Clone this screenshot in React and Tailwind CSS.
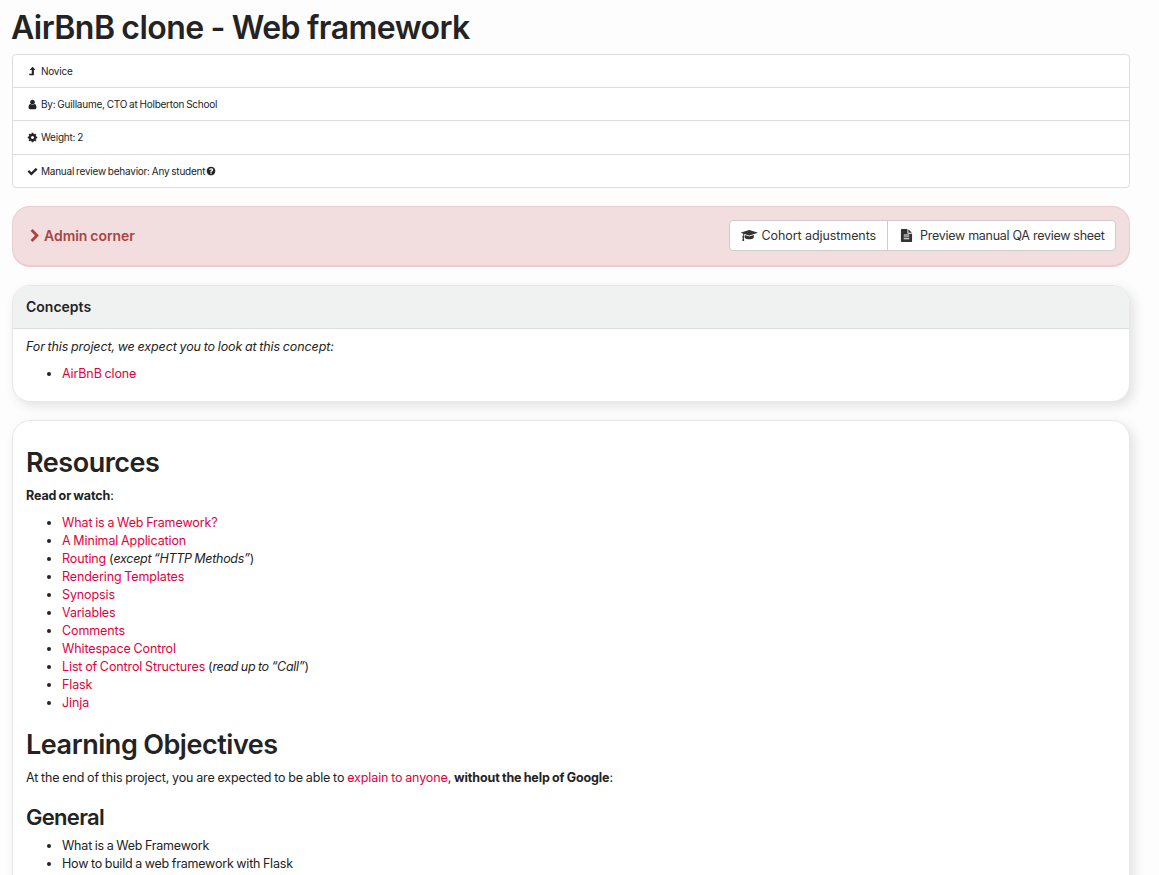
const ICONS = {
  user: "M1536 1399q0 109-62.5 187t-150.5 78h-854q-88 0-150.5-78t-62.5-187q0-85 8.5-160.5t31.5-152 58.5-131 94-89 134.5-34.5q131 128 313 128t313-128q76 0 134.5 34.5t94 89 58.5 131 31.5 152 8.5 160.5zm-256-887q0 159-112.5 271.5t-271.5 112.5-271.5-112.5-112.5-271.5 112.5-271.5 271.5-112.5 271.5 112.5 112.5 271.5z",
  levelUp: "M1400 620q-18 36-58 36h-222v816q0 28-20 28h-620q-14 0-22-12l-150-190q-10-14-6-28 6-14 24-14h450v-600h-222q-40 0-58-36-16-36 10-68l350-384q18-22 48-22t48 22l350 384q26 32 8 68z",
  cog: "M1152 896q0-106-75-181t-181-75-181 75-75 181 75 181 181 75 181-75 75-181zm512-109v222q0 12-8 23t-20 13l-185 28q-19 54-39 91 35 50 107 138 10 12 10 25t-9 23q-27 37-99 108t-94 71q-12 0-26-9l-138-108q-44 23-91 38-16 136-29 186-7 28-36 28h-222q-14 0-24.5-8.5t-11.5-21.5l-28-184q-49-16-90-37l-141 107q-10 9-25 9-14 0-25-11-126-114-165-168-7-10-7-23 0-12 8-23 15-21 51-66.5t54-70.5q-27-50-41-99l-183-27q-13-2-21-12.5t-8-23.5v-222q0-12 8-23t19-13l186-28q14-46 39-92-40-57-107-138-10-12-10-24 0-10 9-23 26-36 98.5-107.5t94.5-71.5q13 0 26 10l138 107q44-23 91-38 16-136 29-186 7-28 36-28h222q14 0 24.5 8.5t11.5 21.5l28 184q49 16 90 37l142-107q9-9 24-9 13 0 25 10 129 119 165 170 7 8 7 22 0 12-8 23-15 21-51 66.5t-54 70.5q26 50 41 98l183 28q13 2 21 12.5t8 23.5z",
  check: "M1671 566q0 40-28 68l-724 724-136 136q-28 28-68 28t-68-28l-136-136-362-362q-28-28-28-68t28-68l136-136q28-28 68-28t68 28l294 295 656-657q28-28 68-28t68 28l136 136q28 28 28 68z",
  question: "M1024 1376v-192q0-14-9-23t-23-9h-192q-14 0-23 9t-9 23v192q0 14 9 23t23 9h192q14 0 23-9t9-23zm256-672q0-88-55.5-163t-138.5-116-170-41q-243 0-371 213-15 24 8 42l132 100q7 6 19 6 16 0 25-12 53-68 86-92 34-24 86-24 48 0 85.5 26t37.5 59q0 38-20 61t-68 45q-63 28-115.5 86.5t-52.5 125.5v36q0 14 9 23t23 9h192q14 0 23-9t9-23q0-19 21.5-49.5t54.5-49.5q32-18 49-28.5t46-35 44.5-48 28-60.5 12.5-81zm384 192q0 209-103 385.5t-279.5 279.5-385.5 103-385.5-103-279.5-279.5-103-385.5 103-385.5 279.5-279.5 385.5-103 385.5 103 279.5 279.5 103 385.5z",
  chevron: "M1363 877l-742 742q-19 19-45 19t-45-19l-166-166q-19-19-19-45t19-45l531-531-531-531q-19-19-19-45t19-45l166-166q19-19 45-19t45 19l742 742q19 19 19 45t-19 45z",
  cap: "M1774 836l18 316q4 69-82 128t-235 93.5-323 34.5-323-34.5-235-93.5-82-128l18-316 574 181q22 7 48 7t48-7zm530-324q0 23-22 31l-1120 352q-4 1-10 1t-10-1l-652-206q-43 34-71 111.5t-34 178.5q63 36 63 109 0 69-58 107l58 433q2 14-8 25-9 11-24 11h-192q-15 0-24-11-10-11-8-25l58-433q-58-38-58-107 0-73 65-111 11-207 98-330l-333-104q-22-8-22-31t22-31l1120-352q4-1 10-1t10 1l1120 352q22 8 22 31z",
  file: "M1596 476q14 14 28 36h-472v-472q22 14 36 28zm-476 164h544v1056q0 40-28 68t-68 28h-1344q-40 0-68-28t-28-68v-1600q0-40 28-68t68-28h800v544q0 40 28 68t68 28zm160 736v-64q0-14-9-23t-23-9h-704q-14 0-23 9t-9 23v64q0 14 9 23t23 9h704q14 0 23-9t9-23zm0-256v-64q0-14-9-23t-23-9h-704q-14 0-23 9t-9 23v64q0 14 9 23t23 9h704q14 0 23-9t9-23zm0-256v-64q0-14-9-23t-23-9h-704q-14 0-23 9t-9 23v64q0 14 9 23t23 9h704q14 0 23-9t9-23z",
};

function Icon({ name, className, width = 1792 }) {
  return (
    <svg viewBox={`0 0 ${width} 1792`} fill="currentColor" className={`block shrink-0 ${className}`}>
      <path d={ICONS[name]} />
    </svg>
  );
}

function MetaRow({ icon, children, className }) {
  return (
    <li className={`flex items-center border-[#ddd] pl-[14px] text-[10px] tracking-[-0.23px] [word-spacing:-0.6px] ${className}`}>
      <Icon name={icon} className="mr-[3px] size-[11px]" />
      {children}
    </li>
  );
}

function Link({ children }) {
  return <a href="#" className="text-[#e0003f]">{children}</a>;
}

function Note({ children }) {
  return <em className="tracking-[-0.3px]">{children}</em>;
}

function Bullets({ items, className = "" }) {
  return (
    <ul className={`list-disc pl-9 ${className}`}>
      {items.map((item, i) => (
        <li key={i} className="h-[18px] whitespace-nowrap">{item}</li>
      ))}
    </ul>
  );
}

const resources = [
  <Link>What is a Web Framework?</Link>,
  <Link>A Minimal Application</Link>,
  <><Link>Routing</Link> (<Note>except “HTTP Methods”</Note>)</>,
  <Link>Rendering Templates</Link>,
  <Link>Synopsis</Link>,
  <Link>Variables</Link>,
  <Link>Comments</Link>,
  <Link>Whitespace Control</Link>,
  <><Link>List of Control Structures</Link> (<Note>read up to “Call”</Note>)</>,
  <Link>Flask</Link>,
  <Link>Jinja</Link>,
];

export default function App() {
  return (
    <main className="h-[875px] overflow-hidden bg-[#fdfdfd] pl-3 pr-[29px] font-[Inter,sans-serif] text-[12.5px] leading-[18px] tracking-[-0.11px] text-[#232323] [word-spacing:-0.6px]">
      <h1 className="-ml-px h-[54px] whitespace-nowrap pt-[10px] text-[32px] font-semibold leading-[36px] tracking-[-0.55px]">AirBnB clone - Web framework</h1>

      <ul className="rounded-[4px] border border-[#ddd] bg-white">
        <MetaRow icon="levelUp" className="h-8">Novice</MetaRow>
        <MetaRow icon="user" className="h-[33px] border-t">By: Guillaume, CTO at Holberton School</MetaRow>
        <MetaRow icon="cog" className="h-[34px] border-t pb-px">Weight: 2</MetaRow>
        <MetaRow icon="check" className="h-[33px] border-t">
          Manual review behavior: Any student
          <Icon name="question" className="ml-[1px] size-[10px]" />
        </MetaRow>
      </ul>

      <section className="mt-[18px] flex h-[61px] items-start justify-between rounded-[18px] border border-b-2 border-[#ebccd1] bg-[#f2dede] pl-[15px] pr-[13px] pt-[13px]">
        <h2 className="flex h-[31px] items-center text-[14px] font-semibold tracking-[-0.03px] text-[#a94442]">
          <Icon name="chevron" className="mr-[2px] size-[14px]" />
          Admin corner
        </h2>
        <div className="flex h-[31px] rounded-[4px] border border-[#ccc] bg-white text-[#333]">
          <button className="flex w-[157px] items-center whitespace-nowrap pl-[11px] tracking-[-0.08px]">
            <Icon name="cap" width={2304} className="mr-1 h-[13px] w-[16.5px]" />
            Cohort adjustments
          </button>
          <button className="flex w-[228px] items-center whitespace-nowrap border-l border-[#ccc] pl-3 tracking-[-0.28px]">
            <Icon name="file" className="mr-[7px] size-[13px]" />
            Preview manual QA review sheet
          </button>
        </div>
      </section>

      <section className="mt-[18px] h-[117px] overflow-hidden rounded-[18px] border border-[#e7e7e7] bg-white shadow-[4px_4px_12px_rgba(0,0,0,0.11)]">
        <h2 className="h-[43px] border-b border-[#ddd] bg-[#f0f2f1] pl-[13px] pt-3 text-[14px] font-semibold tracking-[0px]">Concepts</h2>
        <div className="px-[13px] pt-[9px]">
          <p><em>For this project, we expect you to look at this concept:</em></p>
          <Bullets className="mt-[9px]" items={[<Link>AirBnB clone</Link>]} />
        </div>
      </section>

      <section className="mt-[18px] h-[600px] rounded-[18px] border border-[#e7e7e7] bg-white px-[13px] pt-[27px] shadow-[4px_4px_12px_rgba(0,0,0,0.11)]">
        <h2 className="h-[39px] text-[27px] font-semibold leading-[30px] tracking-[-0.47px]">Resources</h2>
        <p><strong className="font-bold">Read or watch</strong>:</p>
        <Bullets className="mt-[9px]" items={resources} />
        <h2 className="mt-[18px] h-[39px] text-[27px] font-semibold leading-[30px] tracking-[-0.45px]">Learning Objectives</h2>
        <p className="whitespace-nowrap">
          At the end of this project, you are expected to be able to <Link>explain to anyone</Link>, <strong className="font-bold">without the help of Google</strong>:
        </p>
        <h3 className="mt-[17px] h-[33px] text-[22px] font-semibold leading-[26px] tracking-[-0.7px]">General</h3>
        <Bullets className="tracking-[-0.2px]" items={["What is a Web Framework", "How to build a web framework with Flask"]} />
      </section>
    </main>
  );
}
